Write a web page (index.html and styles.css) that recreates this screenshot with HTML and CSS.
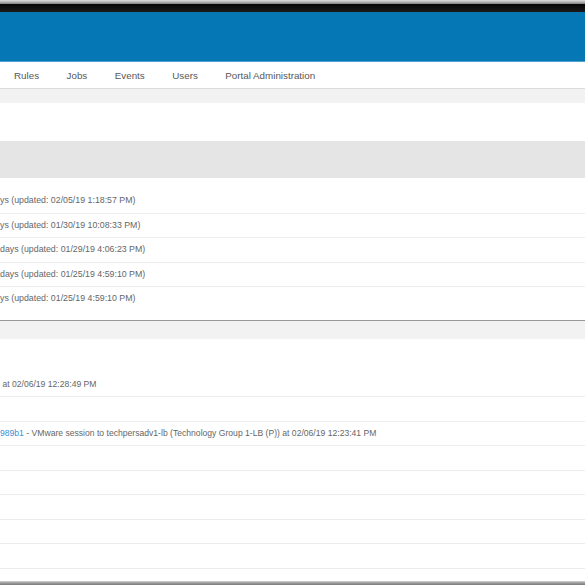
FILE: index.html
```html
<!DOCTYPE html>
<html>
<head>
<meta charset="utf-8">
<link rel="stylesheet" href="styles.css">
</head>
<body>
<div class="page">
  <div class="top-strip"></div>
  <div class="black-bar"></div>
  <div class="header"></div>
  <nav class="nav">
    <a class="nav-item">Rules</a>
    <a class="nav-item">Jobs</a>
    <a class="nav-item">Events</a>
    <a class="nav-item">Users</a>
    <a class="nav-item">Portal Administration</a>
  </nav>
  <div class="subbar"></div>
  <div class="blank"></div>
  <div class="panel-head"></div>
  <div class="list">
    <div class="row">ys (updated: 02/05/19 1:18:57 PM)</div>
    <div class="row">ys (updated: 01/30/19 10:08:33 PM)</div>
    <div class="row">days (updated: 01/29/19 4:06:23 PM)</div>
    <div class="row">days (updated: 01/25/19 4:59:10 PM)</div>
    <div class="row">ys (updated: 01/25/19 4:59:10 PM)</div>
  </div>
  <div class="gap"></div>
  <div class="panel2">
    <div class="row">&nbsp;at 02/06/19 12:28:49 PM</div>
    <div class="row"></div>
    <div class="row"><span class="link">989b1</span> - VMware session to techpersadv1-lb (Technology Group 1-LB (P)) at 02/06/19 12:23:41 PM</div>
    <div class="row"></div>
    <div class="row"></div>
    <div class="row"></div>
    <div class="row"></div>
    <div class="row"></div>
    <div class="row"></div>
  </div>
  <div class="bottom-strip"></div>
</div>
</body>
</html>
```

FILE: styles.css
```css
html, body {
  margin: 0;
  padding: 0;
  background: #ffffff;
  overflow: hidden;
}

.page {
  height: 585px;
  display: flex;
  flex-direction: column;
  font-family: "Liberation Sans", Arial, sans-serif;
  color: #5f5f5f;
}

.top-strip {
  height: 4px;
  flex: none;
  background: linear-gradient(#dcdcdc, #b5b5b5 50%, #7d7d7d);
}

.black-bar {
  height: 8px;
  flex: none;
  background: linear-gradient(#050505, #1a1a1a);
}

.header {
  height: 50px;
  flex: none;
  background: #0677b5;
  border-bottom: 1px solid #4fa0cf;
  box-sizing: border-box;
}

.nav {
  height: 27px;
  flex: none;
  box-sizing: border-box;
  display: flex;
  align-items: center;
  gap: 27.5px;
  padding-left: 14px;
  background: #ffffff;
  border-bottom: 1px solid #dcdcdc;
}

.nav-item {
  font-size: 9.8px;
  color: #585858;
  text-decoration: none;
}

.subbar {
  height: 14px;
  flex: none;
  background: #f2f2f2;
}

.blank {
  height: 38px;
  flex: none;
  background: #ffffff;
}

.panel-head {
  height: 37px;
  flex: none;
  background: #e5e5e5;
}

.list {
  flex: none;
  padding: 11px 0 9px;
  background: #ffffff;
  border-bottom: 1px solid #999999;
  box-shadow: 0 1px 1px #c4c4c4;
}

.row {
  height: 23.5px;
  line-height: 23.5px;
  font-size: 8.8px;
  color: #666666;
  white-space: nowrap;
  overflow: hidden;
  border-bottom: 1px solid #ececec;
}

.list .row:last-child {
  border-bottom: none;
}

.gap {
  height: 18px;
  flex: none;
  background: #f2f2f2;
}

.panel2 {
  flex: 1;
  overflow: hidden;
  padding-top: 34px;
  background: #ffffff;
}

.panel2 .row {
  font-size: 8.6px;
}

.link {
  color: #3b8fd3;
}

.bottom-strip {
  height: 4px;
  flex: none;
  background: linear-gradient(#d6d6d6, #9a9a9a 50%, #7a7a7a);
}
```
